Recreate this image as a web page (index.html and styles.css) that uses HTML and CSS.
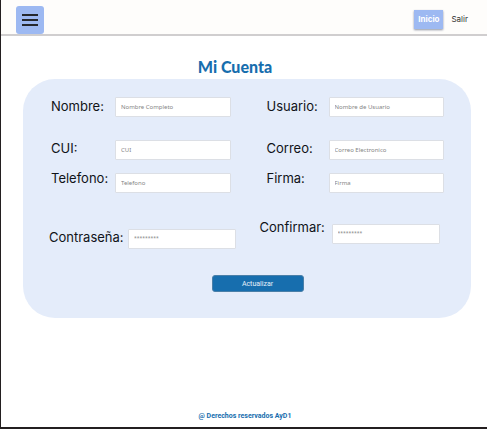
FILE: index.html
```html
<!DOCTYPE html>
<html lang="es">
<head>
  <meta charset="utf-8">
  <meta name="viewport" content="width=device-width, initial-scale=1">
  <title>Mi Cuenta</title>
  <link rel="stylesheet" href="styles.css">
</head>
<body>
  <header class="topbar">
    <button class="menu" type="button" aria-label="Menú">
      <svg viewBox="0 0 28 28" width="28" height="28" aria-hidden="true">
        <path d="M6 9H22M6 14H22M6 19H22" fill="none" stroke="#25282e" stroke-width="2"/>
      </svg>
    </button>
    <nav class="nav">
      <a class="link active" href="#">Inicio</a>
      <a class="link" href="#">Salir</a>
    </nav>
  </header>
  <main class="content">
    <h1 class="title">Mi Cuenta</h1>
    <form class="card">
      <div class="row first">
        <div class="field"><label for="nombre">Nombre:</label><input id="nombre" type="text" placeholder="Nombre Completo"></div>
        <div class="field second"><label for="usuario">Usuario:</label><input id="usuario" type="text" placeholder="Nombre de Usuario"></div>
      </div>
      <div class="row middle">
        <div class="field"><label for="cui">CUI:</label><input id="cui" type="text" placeholder="CUI"></div>
        <div class="field second"><label for="correo">Correo:</label><input id="correo" type="email" placeholder="Correo Electronico"></div>
      </div>
      <div class="row raised">
        <div class="field"><label for="telefono">Telefono:</label><input id="telefono" type="tel" placeholder="Telefono"></div>
        <div class="field second"><label for="firma">Firma:</label><input id="firma" type="text" placeholder="Firma"></div>
      </div>
      <div class="row passwords">
        <div class="field password"><label for="clave">Contraseña:</label><input id="clave" type="password" placeholder="*********"></div>
        <div class="field confirm"><label for="confirmar">Confirmar:</label><input id="confirmar" type="password" placeholder="*********"></div>
      </div>
      <div class="actions"><button class="submit" type="submit">Actualizar</button></div>
    </form>
  </main>
  <footer class="footer">@ Derechos reservados AyD1</footer>
</body>
</html>
```
FILE: styles.css
```css
* {
  box-sizing: border-box;
}

body {
  margin: 0;
  min-height: 100vh;
  display: flex;
  flex-direction: column;
  border-left: 1px solid #231f20;
  border-bottom: 2px solid #231f20;
  background: #fff;
  color: #101318;
  font-family: Inter, "Liberation Sans", sans-serif;
}

.topbar {
  display: flex;
  justify-content: space-between;
  align-items: flex-start;
  height: 36px;
  padding: 6px 15px 0;
  border-bottom: 2px solid #d0cecf;
  background: #fefdfb;
}

.menu {
  display: block;
  width: 28px;
  height: 28px;
  padding: 0;
  border: 0;
  border-radius: 3px;
  background: #9db9f2;
}

.menu svg {
  display: block;
}

.nav {
  display: flex;
  padding-top: 4px;
}

.link {
  padding: 0 4px;
  font-size: 8px;
  line-height: 19px;
  color: #333;
  text-decoration: none;
}

.active {
  margin-right: 4px;
  background: #9db9f2;
  color: #fff;
  font-weight: 700;
  box-shadow: 0 1px 2px #8c93a3;
}

.content {
  flex: 1;
  padding: 20px 16px 0 22px;
}

.title {
  margin: 0;
  padding: 0 24px 2px 0;
  color: #176eae;
  font-family: Lato, "Open Sans", sans-serif;
  font-size: 16px;
  font-weight: 900;
  line-height: 21px;
  text-align: center;
}

.card {
  padding: 18px 27px 26px 28px;
  border-radius: 32px;
  background: #e4ecfa;
}

.row {
  display: grid;
  grid-template-columns: 1fr 1fr;
  gap: 34px;
}

.field {
  display: grid;
  grid-template-columns: 64px 1fr;
  align-items: start;
}

.field label {
  font-size: 13px;
  line-height: 16px;
  white-space: nowrap;
}

.second label {
  padding-left: 2px;
}

.field input {
  width: 100%;
  min-width: 0;
  height: 20px;
  padding: 0 5px;
  border: 1px solid #dcdfe5;
  border-radius: 1px;
  background: #fff;
  color: #333;
  font-family: "Noto Sans", "Open Sans", sans-serif;
  font-size: 6px;
}

.field input::placeholder {
  color: #858585;
  opacity: 1;
}

.first label {
  padding-top: 1px;
}

.middle {
  margin-top: 23px;
}

.raised {
  margin-top: 10px;
}

.raised input {
  margin-top: 3px;
}

.passwords {
  grid-template-columns: 31fr 30fr;
  gap: 24px;
  margin: 26px 4px 0 -2px;
}

.password {
  grid-template-columns: 79px 1fr;
  margin-top: 10px;
}

.confirm {
  grid-template-columns: 72px 1fr;
}

.confirm input {
  margin-top: 5px;
}

.passwords input {
  padding-bottom: 2px;
  font-size: 5px;
}

.actions {
  display: flex;
  justify-content: center;
  padding: 26px 0 0 20px;
}

.submit {
  width: 92px;
  height: 17px;
  padding: 0;
  border: 1px solid #4a7fa8;
  border-radius: 3px;
  background: #176eae;
  color: #e6f0fa;
  font-family: Roboto, sans-serif;
  font-size: 7px;
}

.footer {
  padding: 0 0 6px 2px;
  color: #176eae;
  font-family: Roboto, sans-serif;
  font-size: 7px;
  font-weight: 700;
  line-height: 9px;
  text-align: center;
}
```
